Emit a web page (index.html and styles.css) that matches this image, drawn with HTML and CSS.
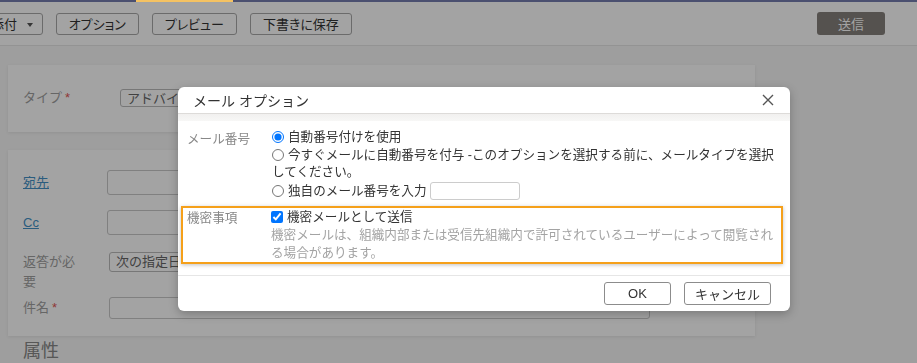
FILE: index.html
```html
<!DOCTYPE html>
<html lang="ja">
<head>
    <meta charset="UTF-8">
    <meta name="viewport" content="width=device-width, initial-scale=1.0">
    <title>メール作成</title>
    <link rel="stylesheet" href="styles.css">
</head>
<body>
    <div class="topbar"><span class="topbar-active"></span></div>

    <div class="toolbar">
        <button class="tool-btn attach">添付 <span class="caret"></span></button>
        <button class="tool-btn">オプション</button>
        <button class="tool-btn">プレビュー</button>
        <button class="tool-btn">下書きに保存</button>
        <button class="send-btn">送信</button>
    </div>

    <main class="content">
        <section class="panel panel-type">
            <div class="form-row">
                <span class="field-label">タイプ<span class="req">*</span></span>
                <div class="select type-select">アドバイザリー</div>
            </div>
        </section>

        <section class="panel panel-main">
            <div class="form-row">
                <a class="field-label link" href="#">宛先</a>
                <div class="text-input"></div>
            </div>
            <div class="form-row row-cc">
                <a class="field-label link" href="#">Cc</a>
                <div class="text-input"></div>
            </div>
            <div class="form-row row-reply">
                <span class="field-label narrow">返答が必要</span>
                <div class="select reply-select">次の指定日</div>
            </div>
            <div class="form-row row-subject">
                <span class="field-label">件名<span class="req">*</span></span>
                <div class="text-input subject-input"></div>
            </div>
        </section>

        <h2 class="section-title">属性</h2>
    </main>

    <div class="overlay"></div>

    <div class="modal">
        <div class="modal-header">
            <span class="modal-title">メール オプション</span>
            <svg class="modal-close" width="12" height="12" viewBox="0 0 12 12">
                <path d="M1 1 L11 11 M11 1 L1 11" stroke="#555" stroke-width="1.4" fill="none"/>
            </svg>
        </div>
        <div class="modal-band"></div>

        <div class="modal-body">
            <div class="option-row">
                <span class="option-label">メール番号</span>
                <div class="option-content">
                    <label class="choice"><input type="radio" name="num" checked>自動番号付けを使用</label>
                    <label class="choice"><input type="radio" name="num">今すぐメールに自動番号を付与 -このオプションを選択する前に、メールタイプを選択してください。</label>
                    <label class="choice"><input type="radio" name="num">独自のメール番号を入力 <span class="small-input"></span></label>
                </div>
            </div>

            <div class="option-row highlight">
                <span class="option-label">機密事項</span>
                <div class="option-content">
                    <label class="choice"><input type="checkbox" checked>機密メールとして送信</label>
                    <p class="hint">機密メールは、組織内部または受信先組織内で許可されているユーザーによって閲覧される場合があります。</p>
                </div>
            </div>
        </div>

        <div class="modal-footer">
            <button class="dlg-btn ok">OK</button>
            <button class="dlg-btn cancel">キャンセル</button>
        </div>
    </div>
</body>
</html>
```

FILE: styles.css
```css
body {
    margin: 0;
    font-family: 'Liberation Sans', 'Noto Sans CJK JP', sans-serif;
    font-size: 13px;
    color: #333;
    background: #f7f7f7;
    overflow: hidden;
}

/* top strip stays above the dim layer */
.topbar {
    position: relative;
    z-index: 20;
    display: flex;
    height: 2px;
    padding-left: 136px;
    background: #4b5070;
}

.topbar-active {
    width: 97px;
    background: #f4c262;
}

.toolbar {
    display: flex;
    align-items: center;
    gap: 13px;
    height: 43px;
    background: #fff;
    border-bottom: 1px solid #e6e6e6;
}

.tool-btn {
    height: 22px;
    padding: 0 12px;
    font-family: inherit;
    font-size: 13px;
    color: #333;
    background: #fff;
    border: 1px solid #a8a8a8;
    border-radius: 3px;
    font-feature-settings: "palt";
}

.tool-btn.attach {
    margin-left: -22px;
    padding-right: 9px;
}

.caret {
    display: inline-block;
    margin-left: 6px;
    vertical-align: 2px;
    border-left: 3px solid transparent;
    border-right: 3px solid transparent;
    border-top: 4px solid #555;
}

.send-btn {
    margin-left: auto;
    margin-right: 32px;
    width: 68px;
    height: 23px;
    font-family: inherit;
    font-size: 13px;
    color: #fff;
    background: #85807c;
    border: none;
    border-radius: 3px;
}

.content {
    padding: 19px 0 0 8px;
}

.panel {
    width: 747px;
    background: #fff;
    box-shadow: 0 1px 3px rgba(0, 0, 0, 0.08);
}

.panel-type {
    padding: 23px 0 24px;
}

.panel-main {
    margin-top: 18px;
    padding: 20px 0 17px;
}

.form-row {
    display: flex;
    align-items: center;
    padding-left: 15px;
}

.field-label {
    width: 84px;
    flex-shrink: 0;
    color: #a0a0a0;
    font-size: 13px;
    line-height: 20px;
}

.field-label.link {
    color: #4391c6;
}

.field-label.narrow {
    width: 62px;
    margin-right: 24px;
}

.panel-type .field-label {
    width: 97px;
}

.req {
    margin-left: 3px;
    color: #e15656;
}

.select {
    height: 18px;
    line-height: 18px;
    padding: 0 6px;
    border: 1px solid #bbb;
    border-radius: 3px;
    color: #666;
    font-size: 13px;
    box-sizing: border-box;
}

.type-select {
    width: 200px;
}

.reply-select {
    width: 130px;
    height: 20px;
}

.text-input {
    width: 543px;
    height: 25px;
    border: 1px solid #c8c8c8;
    border-radius: 3px;
    box-sizing: border-box;
}

.row-cc {
    margin-top: 15px;
}

.row-reply {
    margin-top: 17px;
    align-items: flex-start;
}

.row-subject {
    margin-top: 5px;
}

.row-subject .field-label {
    width: 86px;
}

.subject-input {
    width: 541px;
    height: 22px;
}

.section-title {
    margin: 3px 0 0 15px;
    font-size: 18px;
    line-height: 24px;
    font-weight: normal;
    color: #888;
}

/* dim layer and dialog */
.overlay {
    position: fixed;
    inset: 0;
    z-index: 10;
    background: rgba(0, 0, 0, 0.36);
}

.modal {
    position: absolute;
    left: 178px;
    top: 87px;
    z-index: 30;
    width: 612px;
    background: #fff;
    border-radius: 6px;
    box-shadow: 0 3px 10px rgba(0, 0, 0, 0.25);
    color: #333;
    font-size: 12.6px;
}

.modal-header {
    display: flex;
    align-items: center;
    justify-content: space-between;
    height: 26px;
    padding: 0 16px 0 15px;
    border-bottom: 1px solid #dddbd9;
}

.modal-title {
    font-size: 14px;
    color: #333;
}

.modal-band {
    height: 7px;
    background: linear-gradient(#f1f0ef, #f7f7f6);
}

.modal-body {
    padding: 8px 7px 11px 3px;
}

.option-row {
    display: flex;
    padding-left: 6px;
}

.option-label {
    width: 85px;
    flex-shrink: 0;
    color: #888;
    line-height: 18px;
    padding-top: 1px;
}

.option-content {
    width: 510px;
}

.choice {
    display: block;
    line-height: 17px;
    margin-bottom: 1px;
}

.choice input {
    width: 12px;
    height: 12px;
    margin: 0 4px 0 0;
    vertical-align: -2px;
}

.small-input {
    display: inline-block;
    width: 88px;
    height: 16px;
    vertical-align: -5px;
    border: 1px solid #ccc;
    border-radius: 3px;
}

.highlight {
    margin-top: 5px;
    padding-left: 4px;
    border: 2px solid #f5a01a;
    box-shadow: 0 1px 4px rgba(0, 0, 0, 0.25);
}

.highlight .option-label {
    width: 84px;
}

.highlight .choice {
    line-height: 18px;
    margin: 0;
}

.hint {
    margin: 0;
    max-width: 503px;
    line-height: 18px;
    color: #a3a3a3;
}

.modal-footer {
    display: flex;
    justify-content: flex-end;
    gap: 13px;
    padding: 6px 19px 6px;
    border-top: 1px solid #e6e6e6;
}

.dlg-btn {
    height: 23px;
    font-family: inherit;
    font-size: 13px;
    color: #333;
    background: #fff;
    border: 1px solid #8c8c8c;
    border-radius: 3px;
}

.dlg-btn.ok {
    width: 67px;
}

.dlg-btn.cancel {
    width: 87px;
}
```
